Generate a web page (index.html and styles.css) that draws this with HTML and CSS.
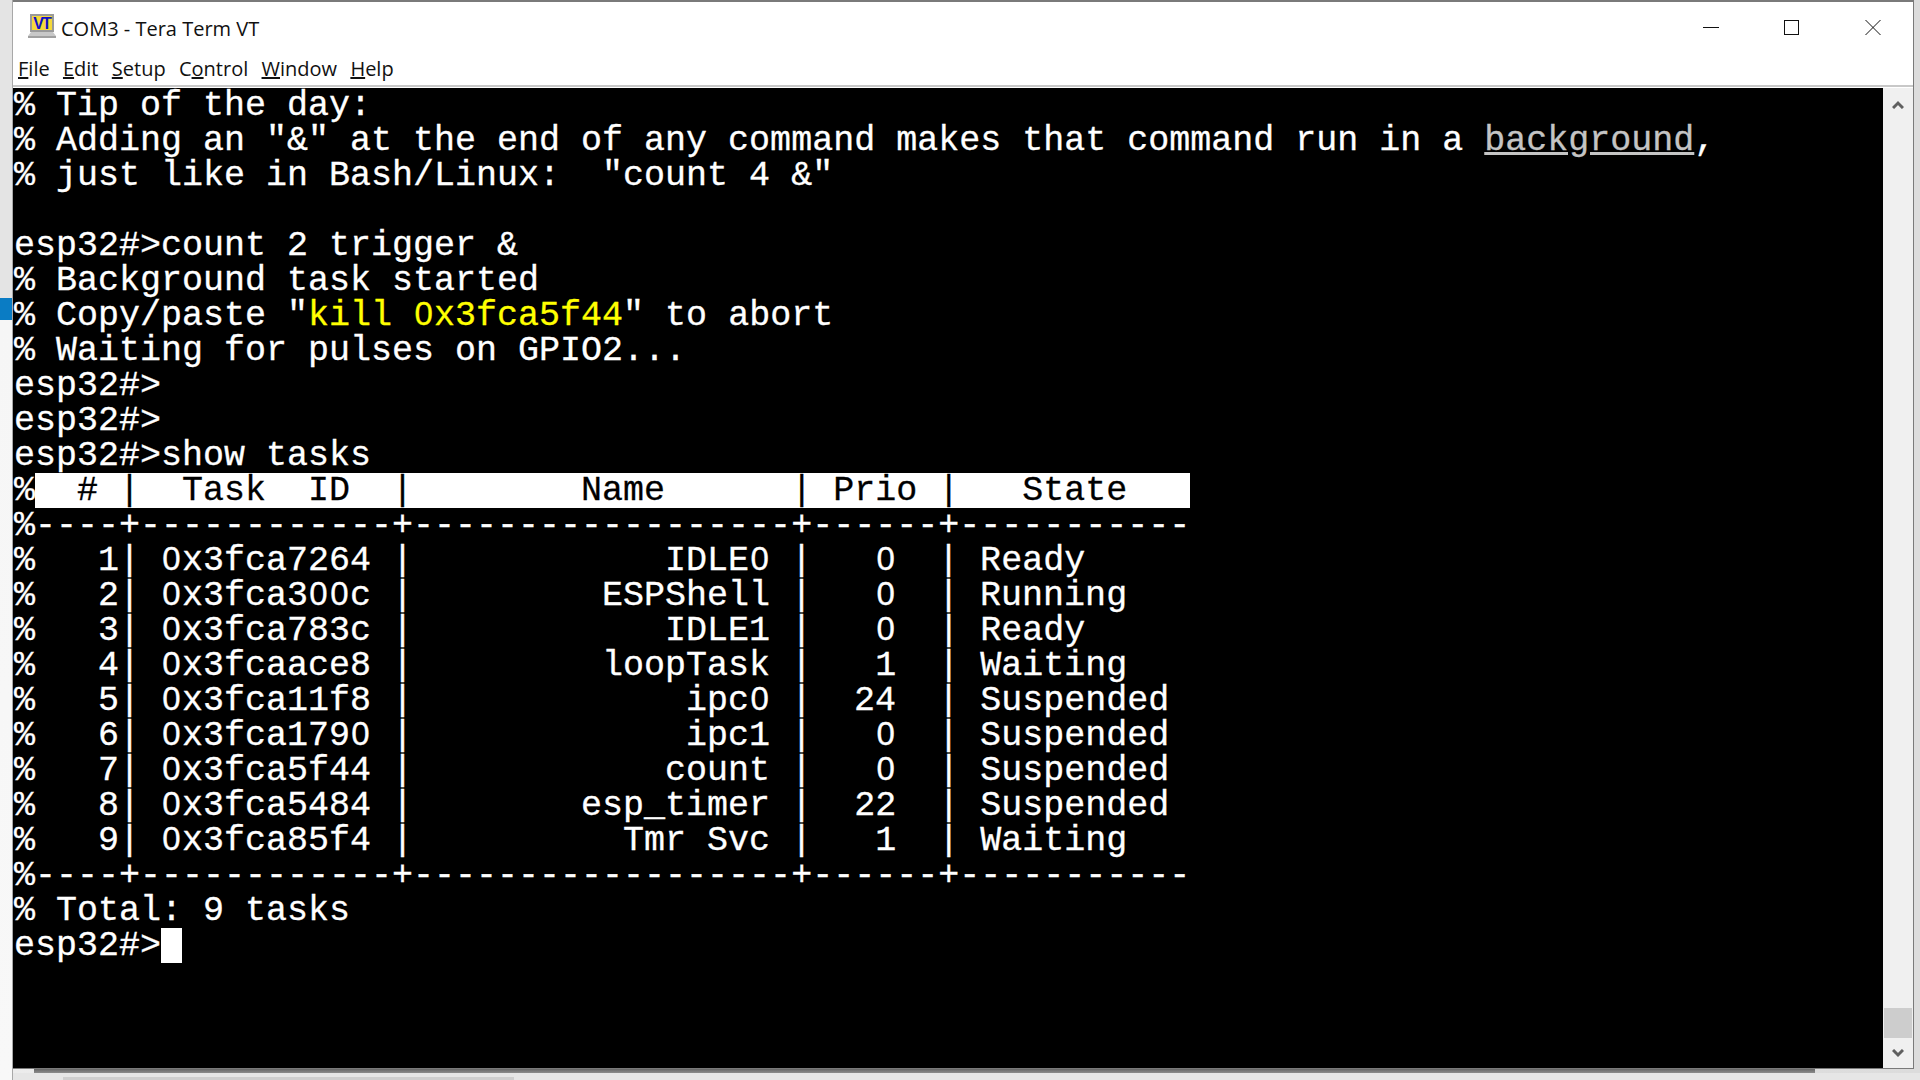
FILE: index.html
```html
<!DOCTYPE html>
<html>
<head>
<meta charset="utf-8">
<title>COM3 - Tera Term VT</title>
<link rel="stylesheet" href="styles.css">
</head>
<body>
<div class="leftstrip"><div class="tab"></div></div>
<div class="stage">
<div class="window">
  <header class="titlebar">
    <svg class="appicon" width="28" height="24" viewBox="0 0 28 24"><rect x="2" y="0" width="24" height="18" fill="#9a9a9a"/><rect x="4" y="2" width="20" height="14" fill="#f5d93a"/><text x="13.500" y="14.500" class="vt">VT</text><path d="M3 18h22l3 4H0z" fill="#c8c8c8"/><rect x="0" y="22" width="28" height="2" fill="#a0a0a0"/></svg>
    <span class="title">COM3 - Tera Term VT</span>
    <div class="controls">
      <svg class="ctl" width="46" height="17" viewBox="0 0 46 17"><path d="M15 8.500h16" stroke="#111" fill="none"/></svg>
      <svg class="ctl" width="46" height="17" viewBox="0 0 46 17"><rect x="15.500" y="1.500" width="14" height="14" stroke="#111" fill="none"/></svg>
      <svg class="ctl" width="46" height="17" viewBox="0 0 46 17"><path d="M15.500 1l15 15M30.500 1l-15 15" stroke="#111" fill="none"/></svg>
    </div>
  </header>
  <nav class="menu">
    <span><u>F</u>ile</span><span><u>E</u>dit</span><span><u>S</u>etup</span><span>C<u>o</u>ntrol</span><span><u>W</u>indow</span><span><u>H</u>elp</span>
  </nav>
  <div class="client">
    <pre class="term"><div>% Tip of the day:</div><div>% Adding an "&amp;" at the end of any command makes that command run in a <span class="link">background</span>,</div><div>% just like in Bash/Linux:  "count 4 &amp;"</div><div> </div><div>esp32#&gt;count 2 trigger &amp;</div><div>% Background task started</div><div>% Copy/paste "<span class="hl">kill <i>0</i>x3fca5f44</span>" to abort</div><div>% Waiting for pulses on GPIO2...</div><div>esp32#&gt;</div><div>esp32#&gt;</div><div>esp32#&gt;show tasks</div><div>%<span class="inv">  # |  Task  ID  |        Name      | Prio |   State   </span></div><div>%----+------------+------------------+------+-----------</div><div>%   1| <i>0</i>x3fca7264 |            IDLE<i>0</i> |   <i>0</i>  | Ready</div><div>%   2| <i>0</i>x3fca3<i>0</i><i>0</i>c |         ESPShell |   <i>0</i>  | Running</div><div>%   3| <i>0</i>x3fca783c |            IDLE1 |   <i>0</i>  | Ready</div><div>%   4| <i>0</i>x3fcaace8 |         loopTask |   1  | Waiting</div><div>%   5| <i>0</i>x3fca11f8 |             ipc<i>0</i> |  24  | Suspended</div><div>%   6| <i>0</i>x3fca179<i>0</i> |             ipc1 |   <i>0</i>  | Suspended</div><div>%   7| <i>0</i>x3fca5f44 |            count |   <i>0</i>  | Suspended</div><div>%   8| <i>0</i>x3fca5484 |        esp_timer |  22  | Suspended</div><div>%   9| <i>0</i>x3fca85f4 |          Tmr Svc |   1  | Waiting</div><div>%----+------------+------------------+------+-----------</div><div>% Total: 9 tasks</div><div>esp32#&gt;<span class="cursor"> </span></div></pre>
    <aside class="scrollbar">
      <div class="arrow up"><svg width="12" height="9" viewBox="0 0 12 9"><path d="M1 8l5-5 5 5" stroke="#606060" stroke-width="3" fill="none"/></svg></div>
      <div class="track"><div class="thumb"></div></div>
      <div class="arrow"><svg width="12" height="9" viewBox="0 0 12 9"><path d="M1 1l5 5 5-5" stroke="#606060" stroke-width="3" fill="none"/></svg></div>
    </aside>
  </div>
</div>
<div class="shadow"></div>
<div class="floor"><div class="sliver"></div></div>
</div>
</body>
</html>
```
FILE: styles.css
```css
html, body { margin: 0; height: 100%; }
body { background: linear-gradient(90deg, #ececec, #dcdcdc); overflow: hidden; display: flex; }
.leftstrip { width: 13px; flex: none; padding-top: 298px; box-sizing: border-box; border-right: 1px solid #a8a8a8; background: linear-gradient(180deg, #e4e4e4 0, #e4e4e4 298px, #f6f6f6 320px, #f8f8f8 100%); }
.tab { height: 22px; background: #0a7cc4; }
.stage { flex: 1; display: flex; flex-direction: column; min-width: 0; }
.window { width: 1901px; height: 1069px; background: #fff; border-top: 2px solid #7a7a7a; border-right: 1px solid #7a7a7a; border-bottom: 1px solid #7a7a7a; display: flex; flex-direction: column; box-sizing: border-box; flex: none; }
.titlebar { height: 53px; display: flex; align-items: center; padding-left: 15px; flex: none; }
.appicon { margin-right: 5px; margin-top: -6px; }
.vt { font: bold 16px "Liberation Sans", sans-serif; letter-spacing: -2px; fill: #1010c8; text-anchor: middle; }
.title { font: 20px "Open Sans", sans-serif; color: #111; }
.controls { margin-left: auto; display: flex; gap: 35px; padding-right: 17px; margin-top: -3px; }
.menu { height: 26px; padding: 0 0 4px 5px; display: flex; gap: 13.300px; font: 20px "Open Sans", sans-serif; color: #111; align-items: center; flex: none; border-bottom: 2px solid #c8c8c8; }
.client { flex: 1; display: flex; background: #000; min-height: 0; margin-top: 1px; }
.term { flex: 1; margin: 0; padding-left: 1px; font: 35px/37px "Liberation Mono", monospace; -webkit-text-stroke: 0.3px currentColor; color: #fff; overflow: hidden; white-space: pre; }
.term div { height: 35px; }
.term i { padding: 0 1.325px; font: 33px/0 "Liberation Sans", sans-serif; }
.link { color: #c4c4c4; text-decoration: underline; }
.hl { color: #ffff00; }
.inv { display: inline-block; height: 35px; background: #fff; color: #000; }
.cursor { display: inline-block; height: 35px; background: #fff; }
.scrollbar { width: 30px; background: #f0f0f0; display: flex; flex-direction: column; flex: none; }
.arrow { height: 30px; flex: none; display: flex; align-items: center; justify-content: center; }
.arrow.up { padding-top: 3px; box-sizing: border-box; }
.track { flex: 1; display: flex; align-items: flex-end; }
.thumb { flex: 1; margin: 0 1px; height: 30px; background: #cdcdcd; }
.shadow { height: 4px; flex: none; margin: 0 105px 0 21px; background: linear-gradient(180deg, #666, #8c8c8c); }
.floor { flex: 1; background: #e6e6e6; display: flex; align-items: flex-end; }
.sliver { width: 451px; height: 3px; margin-left: 50px; background: #cfcfcf; }
```
